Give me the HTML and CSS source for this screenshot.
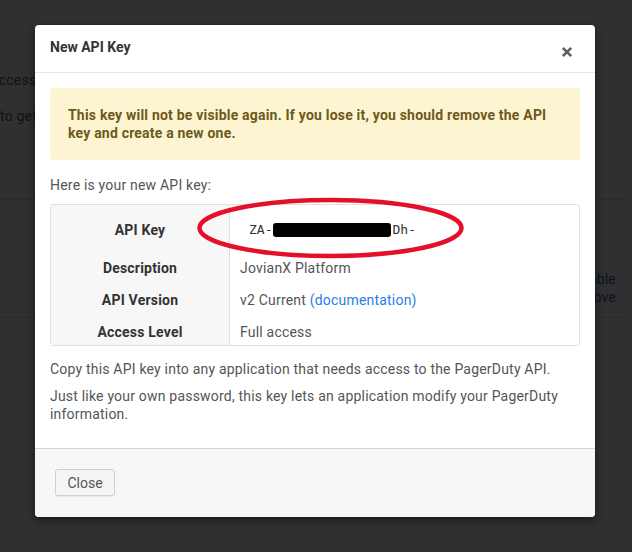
FILE: index.html
```html
<!DOCTYPE html>
<html>
<head>
<meta charset="utf-8">
<link rel="stylesheet" href="styles.css">
</head>
<body>
<div class="page">
  <div class="intro">
    <p class="intro-line intro-first"><span class="intro-pre">API keys give programs</span><span class="intro-rest">access to the PagerDuty REST API.</span></p>
    <p class="intro-line"><span class="intro-pre">Create a new key</span><span class="intro-rest">to get started.</span></p>
  </div>
  <div class="card-row">
    <div class="card card-main"></div>
    <div class="card card-side">
      <p class="side-link">Disable</p>
      <p class="side-link">Remove</p>
    </div>
  </div>
</div>
<div class="backdrop"></div>
<div class="modal">
  <div class="modal-header">
    <h4 class="modal-title">New API Key</h4>
    <button class="modal-close" aria-label="Close">
      <svg width="12" height="12" viewBox="0 0 12 12"><path d="M1.8 1.8 L10.2 10.2 M10.2 1.8 L1.8 10.2" stroke="#5f5f5f" stroke-width="2.6" stroke-linecap="butt"/></svg>
    </button>
  </div>
  <div class="modal-body">
    <div class="alert">This key will not be visible again. If you lose it, you should remove the API key and create a new one.</div>
    <p class="lead">Here is your new API key:</p>
    <div class="key-table-wrap">
      <table class="key-table">
        <tr class="row-key">
          <th>API Key</th>
          <td><span class="key">ZA-<span class="redact"></span>Dh-</span></td>
        </tr>
        <tr>
          <th>Description</th>
          <td>JovianX Platform</td>
        </tr>
        <tr>
          <th>API Version</th>
          <td>v2 Current <a class="doc-link" href="#">(documentation)</a></td>
        </tr>
        <tr class="row-last">
          <th>Access Level</th>
          <td>Full access</td>
        </tr>
      </table>
      <svg class="circle" width="272" height="66" viewBox="0 0 272 66"><ellipse cx="134.5" cy="32" rx="131" ry="28" fill="none" stroke="#e4102a" stroke-width="4.5"/></svg>
    </div>
    <p class="note">Copy this API key into any application that needs access to the PagerDuty API.</p>
    <p class="note">Just like your own password, this key lets an application modify your PagerDuty information.</p>
  </div>
  <div class="modal-footer">
    <button class="btn">Close</button>
  </div>
</div>
</body>
</html>
```

FILE: styles.css
```css
* { box-sizing: border-box; }
html, body { margin: 0; padding: 0; }
body {
  width: 632px;
  height: 552px;
  overflow: hidden;
  background: #ffffff;
  font-family: Roboto, "Liberation Sans", sans-serif;
  letter-spacing: 0.2px;
  color: #555;
  position: relative;
}
.page {
  padding-top: 71px;
}
.intro-line {
  display: flex;
  gap: 4px;
  white-space: nowrap;
  margin: 0 0 18px -304px;
  font-size: 14px;
  line-height: 18px;
  color: #666;
}
.intro-first {
  margin-left: -313px;
}
.intro-pre {
  width: 300px;
  flex: none;
  text-align: right;
}
.card-row {
  display: flex;
  gap: 12px;
  margin-top: 74px;
}
.card {
  height: 119px;
  border: 1px solid #e0e0e0;
  border-radius: 3px;
  background: #fff;
  flex: none;
}
.card-main {
  width: 553px;
  margin-left: -5px;
}
.card-side {
  width: 67px;
  padding: 70px 10px 0 0;
  text-align: right;
}
.side-link {
  margin: 0;
  font-size: 14px;
  line-height: 18px;
  color: #3560d0;
  white-space: nowrap;
}
.backdrop {
  position: absolute;
  inset: 0;
  background: rgba(0, 0, 0, 0.81);
}
.modal {
  position: absolute;
  left: 35px;
  top: 25px;
  width: 560px;
  background: #fff;
  border-radius: 4px;
  box-shadow: 0 3px 9px rgba(0, 0, 0, 0.5);
  overflow: hidden;
}
.modal-header {
  height: 48px;
  border-bottom: 1px solid #e5e5e5;
  display: flex;
  align-items: flex-start;
  justify-content: space-between;
  padding: 13px 22px 0 15px;
}
.modal-title {
  margin: 0;
  font-size: 14px;
  line-height: 18px;
  font-weight: 700;
  letter-spacing: 0;
  color: #333;
}
.modal-close {
  border: none;
  background: none;
  padding: 0;
  margin-top: 8px;
  width: 12px;
  height: 12px;
  display: flex;
}
.modal-body {
  padding: 15px;
}
.alert {
  background: #fdf5d1;
  border-radius: 3px;
  padding: 18px;
  font-size: 14px;
  line-height: 18px;
  font-weight: 700;
  color: #6c5a1c;
}
.lead {
  margin: 16px 0 10px 0;
  font-size: 14px;
  line-height: 18px;
  color: #555;
}
.key-table-wrap {
  position: relative;
}
.key-table {
  width: 100%;
  border-collapse: separate;
  border-spacing: 0;
  border: 1px solid #e0e0e0;
  border-radius: 3px;
  font-size: 14px;
  line-height: 18px;
}
.key-table th {
  width: 179px;
  background: #f7f7f7;
  border-right: 1px solid #e0e0e0;
  color: #333;
  font-weight: 700;
  text-align: center;
  padding: 7px 10px;
}
.key-table td {
  padding: 7px 10px;
  color: #555;
}
.row-key th, .row-key td {
  padding-top: 15px;
  padding-bottom: 13px;
}
.row-last th, .row-last td {
  padding-bottom: 4px;
}
.key {
  font-family: "DejaVu Sans Mono", "Liberation Mono", monospace;
  font-size: 13px;
  letter-spacing: 0;
  color: #333;
  margin-left: 9px;
  display: inline-flex;
  align-items: center;
}
.redact {
  display: inline-block;
  width: 118px;
  height: 14px;
  margin: 0 1px;
  background: #000;
  border-radius: 3px;
}
.doc-link {
  color: #2b7de9;
  text-decoration: none;
}
.circle {
  position: absolute;
  left: 146px;
  top: -8px;
}
.note {
  margin: 14px 0 0 0;
  font-size: 14px;
  line-height: 18px;
  color: #555;
}
.note + .note {
  margin-top: 9px;
  margin-bottom: 10px;
}
.modal-footer {
  border-top: 1px solid #d5d5d5;
  background: #f7f7f7;
  padding: 20px 20px 21px 20px;
  height: 69px;
}
.btn {
  height: 27px;
  width: 60px;
  padding: 0;
  background: #f5f5f5;
  border: 1px solid #cfcfcf;
  border-radius: 3px;
  font-family: Roboto, "Liberation Sans", sans-serif;
  font-size: 14px;
  color: #555;
  box-shadow: 0 1px 1px rgba(0,0,0,0.06);
}
```
